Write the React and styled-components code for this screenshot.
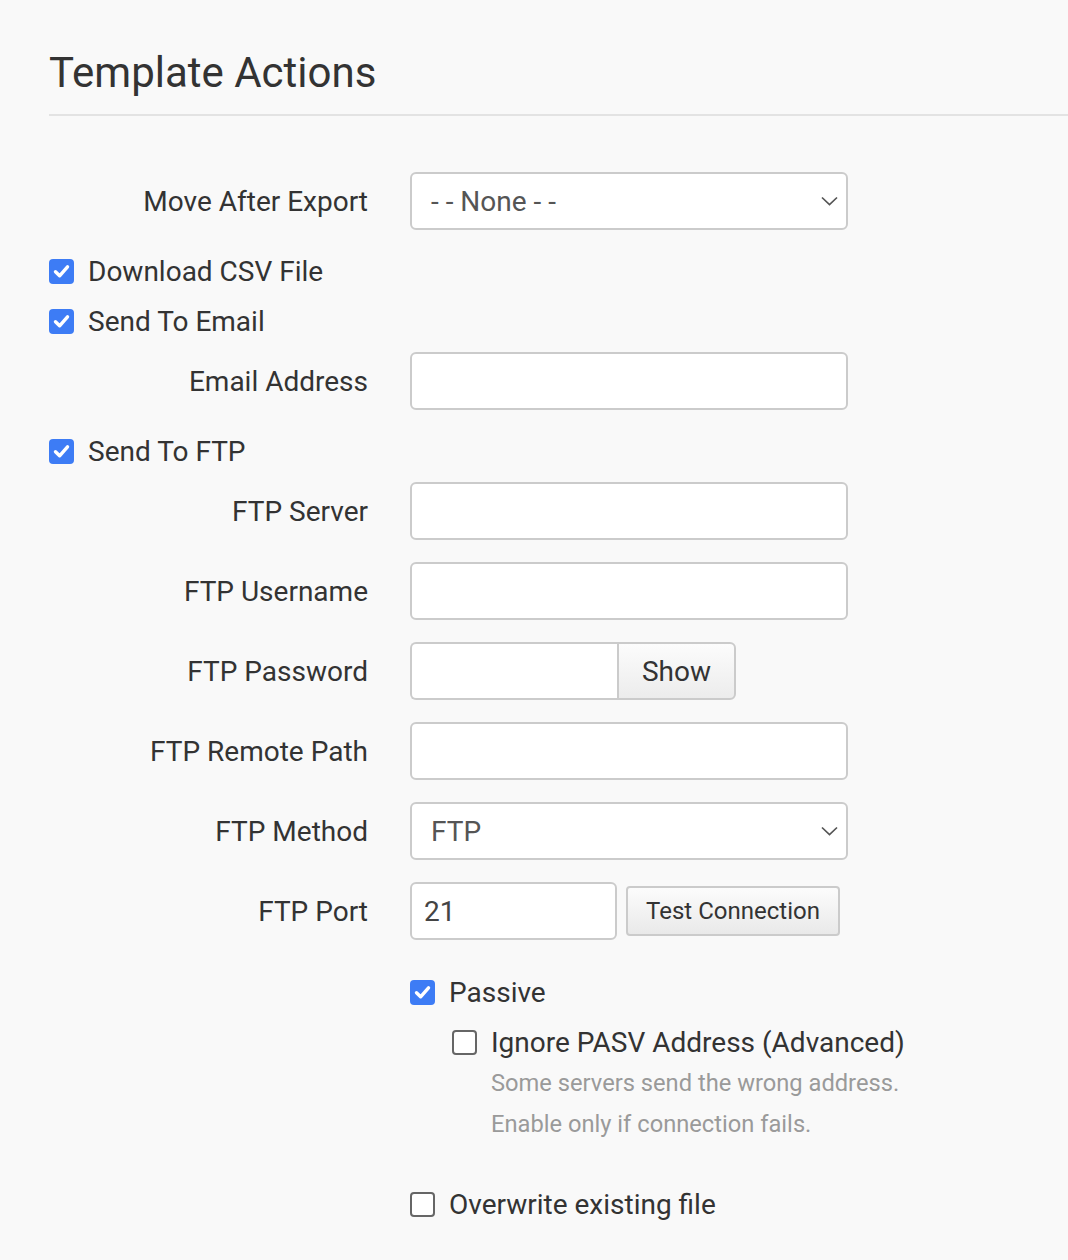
import React from 'react'
import styled, { createGlobalStyle } from 'styled-components'

const Global = createGlobalStyle`
  html, body { margin: 0; padding: 0; }
  body {
    background-color: #f9f9f9;
    font-family: Roboto, "Liberation Sans", sans-serif;
    color: #333;
  }
`

function Check({ checked }) {
    return (
        <Box checked={checked}>
            {checked && (
                <svg width="25" height="25" viewBox="0 0 25 25">
                    <path d="M6.5 12.8 L10.6 16.8 L18.5 7.8" fill="none" stroke="#fff" strokeWidth="3.4" strokeLinecap="round" strokeLinejoin="round" />
                </svg>
            )}
        </Box>
    )
}

function Chevron() {
    return (
        <Arrow width="17" height="10" viewBox="0 0 17 10">
            <path d="M1 1.5 L8.5 8.5 L16 1.5" fill="none" stroke="#555" strokeWidth="1.7" />
        </Arrow>
    )
}

function App() {
    return (
        <Page>
            <Global />
            <Header>
                <Title>Template Actions</Title>
            </Header>
            <Form>
                <Field>
                    <Label>Move After Export</Label>
                    <Select>
                        <span>- - None - -</span>
                        <Chevron />
                    </Select>
                </Field>
                <CheckRow>
                    <Check checked />
                    <CheckText>Download CSV File</CheckText>
                </CheckRow>
                <CheckRow>
                    <Check checked />
                    <CheckText>Send To Email</CheckText>
                </CheckRow>
                <Field>
                    <Label>Email Address</Label>
                    <Input />
                </Field>
                <CheckRow>
                    <Check checked />
                    <CheckText>Send To FTP</CheckText>
                </CheckRow>
                <Field>
                    <Label>FTP Server</Label>
                    <Input />
                </Field>
                <Field>
                    <Label>FTP Username</Label>
                    <Input />
                </Field>
                <Field>
                    <Label>FTP Password</Label>
                    <Group>
                        <Input width="207px" joined />
                        <ShowButton>Show</ShowButton>
                    </Group>
                </Field>
                <Field>
                    <Label>FTP Remote Path</Label>
                    <Input />
                </Field>
                <Field>
                    <Label>FTP Method</Label>
                    <Select>
                        <span>FTP</span>
                        <Chevron />
                    </Select>
                </Field>
                <Field last>
                    <Label>FTP Port</Label>
                    <Group>
                        <Input width="207px" value="21" />
                        <TestButton>Test Connection</TestButton>
                    </Group>
                </Field>
                <Options>
                    <CheckRow>
                        <Check checked />
                        <CheckText>Passive</CheckText>
                    </CheckRow>
                    <Nested>
                        <CheckRow gapAfter={0}>
                            <Check />
                            <CheckText>Ignore PASV Address (Advanced)</CheckText>
                        </CheckRow>
                        <Help>
                            Some servers send the wrong address.<br />
                            Enable only if connection fails.
                        </Help>
                    </Nested>
                    <CheckRow>
                        <Check />
                        <CheckText>Overwrite existing file</CheckText>
                    </CheckRow>
                </Options>
            </Form>
        </Page>
    )
}

export default App

const Page = styled.div`
padding: 0 0 40px 49px;
`
const Header = styled.div`
padding-top: 46px;
border-bottom: 2px solid #e3e3e3;
padding-bottom: 14px;
`
const Title = styled.h1`
margin: 0;
font-size: 42px;
font-weight: 400;
line-height: 54px;
color: #333;
`
const Form = styled.div`
padding-top: 56px;
`
const Field = styled.div`
display: grid;
grid-template-columns: 319px 438px;
column-gap: 42px;
align-items: center;
margin-bottom: ${p => (p.last ? '33px' : '22px')};
`
const Label = styled.div`
text-align: right;
font-size: 28px;
color: #333;
white-space: nowrap;
`
const controlBase = `
box-sizing: border-box;
height: 58px;
background: #fff;
border: 2px solid #cbcbcb;
border-radius: 6px;
font-family: Roboto, "Liberation Sans", sans-serif;
font-size: 28px;
`
const Input = styled.input.attrs({ readOnly: true })`
${controlBase}
width: ${p => p.width || '438px'};
padding: 0 12px;
color: #444;
outline: none;
${p => p.joined && 'border-top-right-radius: 0; border-bottom-right-radius: 0; border-right: none;'}
`
const Select = styled.div`
${controlBase}
display: flex;
align-items: center;
justify-content: space-between;
padding: 0 8px 0 19px;
color: #555;
`
const Arrow = styled.svg`
display: block;
`
const Group = styled.div`
display: flex;
align-items: center;
`
const ShowButton = styled.button`
box-sizing: border-box;
height: 58px;
width: 119px;
border: 2px solid #cbcbcb;
border-radius: 0 6px 6px 0;
background: linear-gradient(#fcfcfc, #ececec);
font-family: Roboto, "Liberation Sans", sans-serif;
font-size: 28px;
color: #333;
padding: 0;
`
const TestButton = styled.button`
box-sizing: border-box;
margin-left: 9px;
height: 50px;
width: 214px;
border: 2px solid #cbcbcb;
border-radius: 4px;
background: linear-gradient(#fcfcfc, #e9e9e9);
font-family: Roboto, "Liberation Sans", sans-serif;
font-size: 24px;
color: #333;
padding: 0;
`
const CheckRow = styled.div`
display: flex;
align-items: center;
height: 38px;
white-space: nowrap;
margin-bottom: ${p => (p.gapAfter !== undefined ? p.gapAfter : 12)}px;
`
const Box = styled.span`
box-sizing: border-box;
width: 25px;
height: 25px;
border-radius: 4px;
display: flex;
align-items: center;
justify-content: center;
flex-shrink: 0;
background: ${p => (p.checked ? '#3d7cf5' : '#fff')};
border: ${p => (p.checked ? 'none' : '2px solid #666')};
`
const CheckText = styled.span`
margin-left: 14px;
font-size: 28px;
color: #333;
`
const Options = styled.div`
padding-left: 361px;
`
const Nested = styled.div`
padding-left: 42px;
margin-bottom: 40px;
`
const Help = styled.div`
margin-top: 2px;
padding-left: 39px;
font-size: 23.7px;
line-height: 41px;
color: #9a9a9a;
white-space: nowrap;
`
